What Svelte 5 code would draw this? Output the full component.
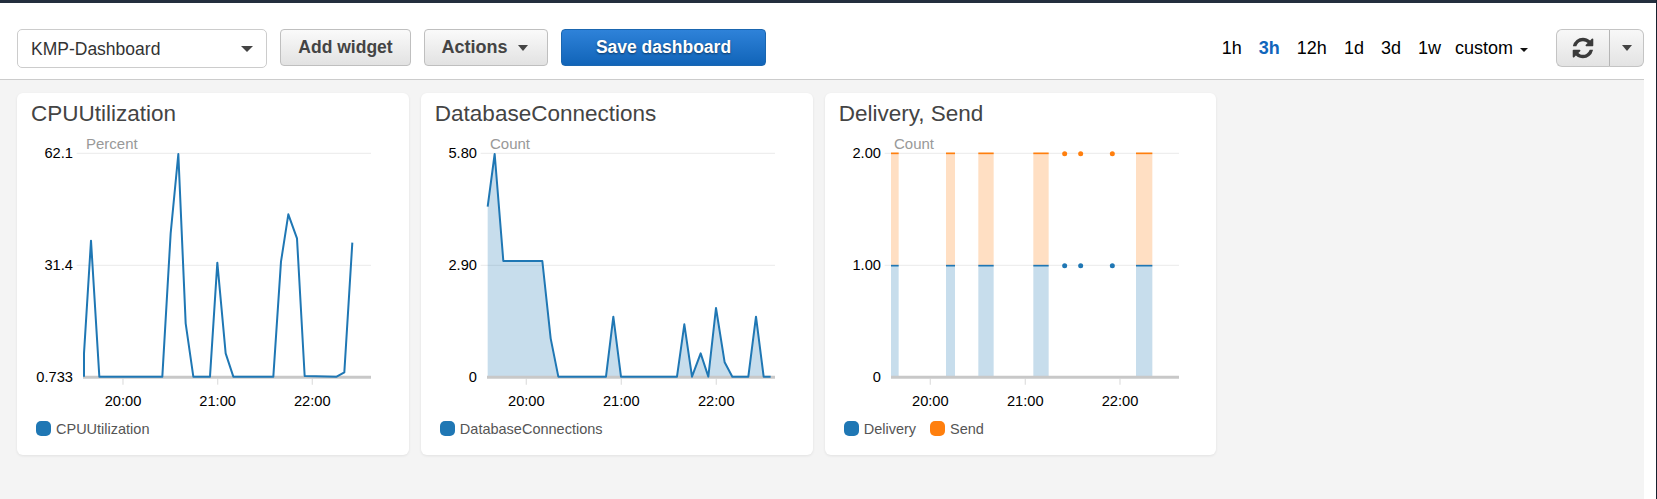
<script>
  const H = 860;
  const toPts = (p) => p.map((q) => q.join(',')).join(' ');

  const cpu = [[222,860],[222,790],[243,452],[268,860],[457,860],[482,430],[505,192],[527,700],[550,860],[600,860],[622,518],[647,790],[670,860],[790,860],[813,515],[835,373],[861,445],[884,858],[980,860],[1003,847],[1027,458]];
  const db = [[218,350],[239,192],[265,513],[382,513],[407,745],[430,860],[573,860],[595,680],[618,860],[786,860],[808,703],[831,860],[857,790],[880,860],[903,654],[929,817],[952,860],[1000,860],[1023,680],[1046,860],[1067,860]];
  const bars = [[213,236],[378,405],[475,521],[640,686],[948,997]];
  const dots = [734,782,877];

  const charts = [
    { title: 'CPUUtilization', off: 21, unit: 'Percent', ticks: ['62.1','31.4','0.733'], times: [339,623,907], line: cpu, fill: false, legend: [['CPUUtilization','#1f77b4']] },
    { title: 'DatabaseConnections', off: 18, unit: 'Count', ticks: ['5.80','2.90','0'], times: [334,619,904], line: db, fill: true, legend: [['DatabaseConnections','#1f77b4']] },
    { title: 'Delivery, Send', off: 15, unit: 'Count', ticks: ['2.00','1.00','0'], times: [331,616,900], stacked: true, legend: [['Delivery','#1f77b4'],['Send','#ff7f0e']] }
  ];
  const ys = [190, 526, 861];
  const ranges = [['1h',false],['3h',true],['12h',false],['1d',false],['3d',false],['1w',false]];
  const refresh = 'M1639 1056q0 5-1 7-64 268-268 434.5t-478 166.5q-146 0-282.5-55t-243.5-157l-129 129q-19 19-45 19t-45-19-19-45v-448q0-26 19-45t45-19h448q26 0 45 19t19 45-19 45l-137 137q71 66 161 102t187 36q134 0 250-65t186-179q11-17 53-117 8-23 30-23h192q13 0 22.5 9.5t9.5 22.5zm25-800v448q0 26-19 45t-45 19h-448q-26 0-45-19t-19-45 19-45l138-138q-148-137-349-137-134 0-250 65t-186 179q-11 17-53 117-8 23-30 23h-199q-13 0-22.5-9.5t-9.5-22.5v-7q65-268 270-434.5t480-166.5q146 0 284 55.5t245 156.5l130-129q19-19 45-19t45 19 19 45z';
</script>

<div class="page">
  <div class="topbar"></div>
  <div class="body">
    <header class="toolbar">
      <div class="select"><span>KMP-Dashboard</span><i class="caret big"></i></div>
      <button class="btn">Add widget</button>
      <button class="btn actions">Actions<i class="caret mid"></i></button>
      <button class="btn primary">Save dashboard</button>
      <nav class="ranges">
        {#each ranges as [label, active]}
          <span class:active>{label}</span>
        {/each}
        <span class="custom">custom<i class="caret small"></i></span>
      </nav>
      <div class="refresh">
        <button class="rbtn main" aria-label="Refresh">
          <svg viewBox="0 0 1792 1792" width="24" height="24"><path d={refresh} fill="#3a3a3a" /></svg>
        </button>
        <button class="rbtn more" aria-label="More"><i class="caret mid"></i></button>
      </div>
    </header>

    <main class="grid">
      {#each charts as c}
        <section class="card">
          <h2>{c.title}</h2>
          <svg class="chart" viewBox="{c.off} 120 1175 855">
            <text class="unit" x={c.off + 207} y="176">{c.unit}</text>
            {#each ys as y, i}
              {#if i < 2}
                <line x1={c.off + 179} x2={c.off + 1062} y1={y} y2={y} class="grid-line" />
              {/if}
              <text class="yl" x={c.off + 168} y={y + 15}>{c.ticks[i]}</text>
            {/each}
            {#each c.times as t, i}
              <line x1={t} x2={t} y1="866" y2="884" class="tick" />
              <text class="xl" x={t} y="947">{['20:00','21:00','22:00'][i]}</text>
            {/each}

            {#if c.line}
              {#if c.fill}
                <polygon points={toPts([...c.line, [c.line[c.line.length - 1][0], H], [c.line[0][0], H]])} fill="#1f77b4" fill-opacity="0.25" />
              {/if}
            {/if}
            {#if c.stacked}
              {#each bars as [a, b]}
                <rect x={a} y="527" width={b - a} height="333" fill="#1f77b4" fill-opacity="0.25" />
                <rect x={a} y="190" width={b - a} height="337" fill="#ff7f0e" fill-opacity="0.25" />
              {/each}
            {/if}

            <line x1={c.off + 198} x2={c.off + 1062} y1="862" y2="862" class="axis" />

            {#if c.line}
              <polyline points={toPts(c.line)} class="series" />
            {/if}
            {#if c.stacked}
              {#each bars as [a, b]}
                <line x1={a} x2={b} y1="527" y2="527" stroke="#1f77b4" stroke-width="5" />
                <line x1={a} x2={b} y1="190" y2="190" stroke="#ff7f0e" stroke-width="5" />
              {/each}
              {#each dots as x}
                <circle cx={x} cy="527" r="7.5" fill="#1f77b4" />
                <circle cx={x} cy="191" r="7.5" fill="#ff7f0e" />
              {/each}
            {/if}
          </svg>
          <div class="legend">
            {#each c.legend as [name, color]}
              <span class="item"><i class="swatch" style="background:{color}"></i>{name}</span>
            {/each}
          </div>
        </section>
      {/each}
    </main>
  </div>
</div>

<style>
  :global(body) { margin: 0; background: #fff; }
  .page {
    width: 1657px; height: 499px; box-sizing: border-box;
    border-right: 1px solid #16202e;
    display: flex; flex-direction: column; overflow: hidden;
    font-family: "Liberation Sans", Arial, sans-serif;
    color: #444;
  }
  .topbar { height: 3px; background: #232f3e; flex: none; margin-right: -1px; }
  .body { width: 1644px; flex: 1; display: flex; flex-direction: column; }
  .toolbar {
    height: 77px; box-sizing: border-box; flex: none;
    padding: 26px 0 0 17px;
    display: flex; align-items: flex-start; gap: 13px;
    background: #fff; border-bottom: 1px solid #ccc;
  }
  .select {
    width: 250px; height: 39px; box-sizing: border-box;
    border: 1px solid #ccc; border-radius: 5px; background: #fff;
    display: flex; align-items: center; justify-content: space-between;
    padding: 1px 13px 0; font-size: 17.5px; color: #333;
  }
  .btn {
    height: 37px; box-sizing: border-box; padding: 0; margin: 0;
    border: 1px solid #bfbfbf; border-radius: 4px;
    background: linear-gradient(#fafafa, #e2e2e2);
    font: bold 17.5px "Liberation Sans", Arial, sans-serif; color: #444;
    width: 131px;
  }
  .actions { width: 124px; display: flex; align-items: center; justify-content: center; gap: 10px; font-size: 18px; padding-right: 3px; }
  .primary {
    width: 205px; color: #fff; border-color: #1a66b0;
    background: linear-gradient(#2e82d9, #1164b8);
    text-shadow: 0 1px 2px rgba(0, 0, 0, 0.5);
  }
  .caret { display: inline-block; width: 0; height: 0; border-style: solid; border-color: #444 transparent transparent; }
  .big { border-width: 6px 6px 0; margin-right: 0; }
  .mid { border-width: 6px 5.5px 0; }
  .small { border-width: 4px 4px 0; border-top-color: #111; margin-left: 7px; vertical-align: 2px; }
  .ranges {
    margin-left: auto; margin-right: 15px; height: 39px;
    display: flex; align-items: center; gap: 17px;
    font-size: 18px; color: #000;
  }
  .ranges .active { color: #1166bb; font-weight: bold; }
  .ranges .custom { margin-left: -3px; }
  .refresh { display: flex; height: 38px; }
  .rbtn {
    box-sizing: border-box; height: 38px; padding: 0; margin: 0;
    border: 1px solid #c4c4c4;
    background: linear-gradient(#f8f8f8, #e3e3e3);
    display: flex; align-items: center; justify-content: center;
  }
  .main { width: 53px; border-radius: 6px 0 0 6px; border-right: 0; }
  .more { width: 35px; border-radius: 0 6px 6px 0; border-left: 1px solid #b5b5b5; }
  .grid {
    flex: 1; background: #f4f4f4;
    padding: 13px 0 0 17px;
    display: flex; align-items: flex-start; gap: 12.2px;
  }
  .card {
    width: 391.67px; flex: none; background: #fff; border-radius: 6px;
    box-shadow: 0 1px 3px rgba(0, 0, 0, 0.08);
    padding-bottom: 19px;
  }
  h2 {
    margin: 0; height: 37px; box-sizing: border-box; padding: 8px 0 0 14px;
    font-size: 22.5px; line-height: 26px; font-weight: normal; color: #444;
  }
  .chart { display: block; width: 391.67px; height: 285px; }
  .chart text { font-size: 44px; fill: #000; }
  .chart .unit { fill: #999; font-size: 45px; }
  .chart .yl { text-anchor: end; }
  .chart .xl { text-anchor: middle; }
  .grid-line { stroke: #eee; stroke-width: 4; }
  .tick { stroke: #e2e2e2; stroke-width: 4; }
  .axis { stroke: #c8c8c8; stroke-width: 9; }
  .series { fill: none; stroke: #1f77b4; stroke-width: 6; stroke-linejoin: round; }
  .legend {
    height: 15px; margin-top: 6px; padding-left: 19px;
    display: flex; gap: 14px; font-size: 14.5px; color: #555;
  }
  .item { display: flex; align-items: center; gap: 5px; }
  .swatch { width: 15px; height: 15px; border-radius: 5px; flex: none; }
</style>
